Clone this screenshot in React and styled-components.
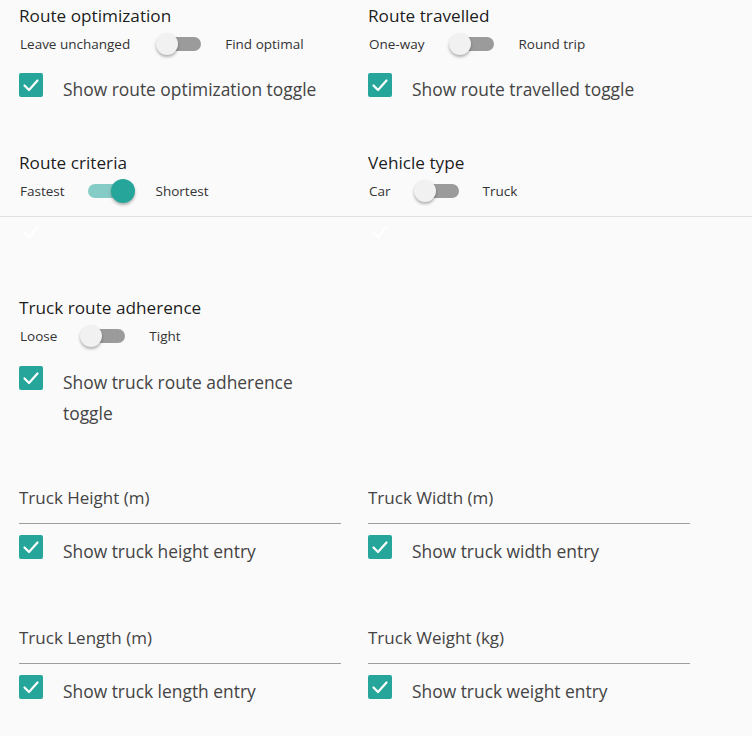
import React from 'react';
import styled, { createGlobalStyle } from 'styled-components';

const GlobalStyle = createGlobalStyle`
    html, body {
        margin: 0;
        padding: 0;
        background: #fafafa;
    }
    body {
        font-family: "Open Sans", "Noto Sans", sans-serif;
        color: rgba(0, 0, 0, 0.87);
    }
`

const Page = styled.div`
    width: 752px;
    min-height: 736px;
    padding-top: ${(p) => p.top}px;
    box-sizing: border-box;
    background: #fafafa;
`
const Row = styled.div`
    display: grid;
    grid-template-columns: 349px 349px;
    padding-left: 19px;
    margin-top: ${(p) => p.gap || 0}px;
`
const Cell = styled.div`
    display: flex;
    flex-direction: column;
`
const Title = styled.div`
    font-size: 17.2px;
    line-height: 24px;
    color: rgba(0, 0, 0, 0.9);
`
const SwitchRow = styled.label`
    display: flex;
    align-items: center;
    height: 32px;
    font-size: 13.5px;
    color: #333;
    padding-left: 1px;
`
const Track = styled.span`
    position: relative;
    display: inline-block;
    width: 44px;
    height: 14px;
    border-radius: 7px;
    margin: 0 24px 0 ${(p) => p.offset}px;
    background: ${(p) => (p.on ? 'rgba(38, 166, 154, 0.55)' : '#9b9b9b')};
`
const Thumb = styled.span`
    position: absolute;
    top: 50%;
    left: ${(p) => (p.on ? '23px' : '-1px')};
    width: ${(p) => (p.on ? 24 : 22)}px;
    height: ${(p) => (p.on ? 24 : 22)}px;
    border-radius: 50%;
    transform: translateY(-50%);
    background: ${(p) => (p.on ? '#26a69a' : '#f1f1f1')};
    box-shadow: 0 2px 3px rgba(0, 0, 0, 0.3);
`
const CheckRow = styled.label`
    display: flex;
    align-items: flex-start;
    min-height: 31px;
    margin-top: ${(p) => p.gap || 0}px;
    padding-right: 40px;
`
const Box = styled.span`
    flex: 0 0 24px;
    width: 24px;
    height: 24px;
    border-radius: 2px;
    display: flex;
    align-items: center;
    justify-content: center;
    background: ${(p) => (p.on ? '#26a69a' : 'transparent')};
`
const CheckText = styled.span`
    margin-left: 20px;
    padding-top: 1px;
    font-size: 17.4px;
    line-height: 31px;
    color: #444;
`
const Divider = styled.div`
    height: 1px;
    background: #e0e0e0;
    margin-top: 9px;
`
const Field = styled.div`
    display: flex;
    flex-direction: column;
`
const FieldLabel = styled.div`
    font-size: 17px;
    line-height: 24px;
    color: #444;
`
const Underline = styled.div`
    width: 322px;
    height: 13px;
    border-bottom: 1px solid #9e9e9e;
`

const Check = () => (
    <svg width="18" height="18" viewBox="0 0 18 18">
        <polyline points="2.5,9.5 7,14 15.5,4.5" fill="none" stroke="#fff" strokeWidth="2.2" strokeLinecap="round" strokeLinejoin="round" />
    </svg>
)

const Switch = ({ left, right, on, offset }) => (
    <SwitchRow>
        <span>{left}</span>
        <Track on={on} offset={offset}>
            <Thumb on={on} />
        </Track>
        <span>{right}</span>
    </SwitchRow>
)

const CheckItem = ({ text, on = true, gap }) => (
    <CheckRow gap={gap}>
        <Box on={on}><Check /></Box>
        {text && <CheckText>{text}</CheckText>}
    </CheckRow>
)

const toggles = [
    { title: 'Route optimization', left: 'Leave unchanged', right: 'Find optimal', offset: 27, check: 'Show route optimization toggle' },
    { title: 'Route travelled', left: 'One-way', right: 'Round trip', offset: 26, check: 'Show route travelled toggle' },
]

const App = () => {
    return (
        <>
            <GlobalStyle />
            <Page top={4}>
                <Row>
                    {toggles.map((t) => (
                        <Cell key={t.title}>
                            <Title>{t.title}</Title>
                            <Switch left={t.left} right={t.right} offset={t.offset} />
                            <CheckItem text={t.check} gap={13} />
                        </Cell>
                    ))}
                </Row>

                <Row gap={46}>
                    <Cell>
                        <Title>Route criteria</Title>
                        <Switch left="Fastest" right="Shortest" on offset={23} />
                    </Cell>
                    <Cell>
                        <Title>Vehicle type</Title>
                        <Switch left="Car" right="Truck" offset={24} />
                    </Cell>
                </Row>
                <Divider />
                <Row>
                    <CheckItem on={false} gap={3} />
                    <CheckItem on={false} gap={3} />
                </Row>

                <Row gap={45}>
                    <Cell>
                        <Title>Truck route adherence</Title>
                        <Switch left="Loose" right="Tight" offset={24} />
                        <CheckItem text="Show truck route adherence toggle" gap={14} />
                    </Cell>
                </Row>

                <Row gap={57}>
                    <Field>
                        <FieldLabel>Truck Height (m)</FieldLabel>
                        <Underline />
                        <CheckItem text="Show truck height entry" gap={11} />
                    </Field>
                    <Field>
                        <FieldLabel>Truck Width (m)</FieldLabel>
                        <Underline />
                        <CheckItem text="Show truck width entry" gap={11} />
                    </Field>
                </Row>

                <Row gap={59}>
                    <Field>
                        <FieldLabel>Truck Length (m)</FieldLabel>
                        <Underline />
                        <CheckItem text="Show truck length entry" gap={11} />
                    </Field>
                    <Field>
                        <FieldLabel>Truck Weight (kg)</FieldLabel>
                        <Underline />
                        <CheckItem text="Show truck weight entry" gap={11} />
                    </Field>
                </Row>
            </Page>
        </>
    )
}

export default App
